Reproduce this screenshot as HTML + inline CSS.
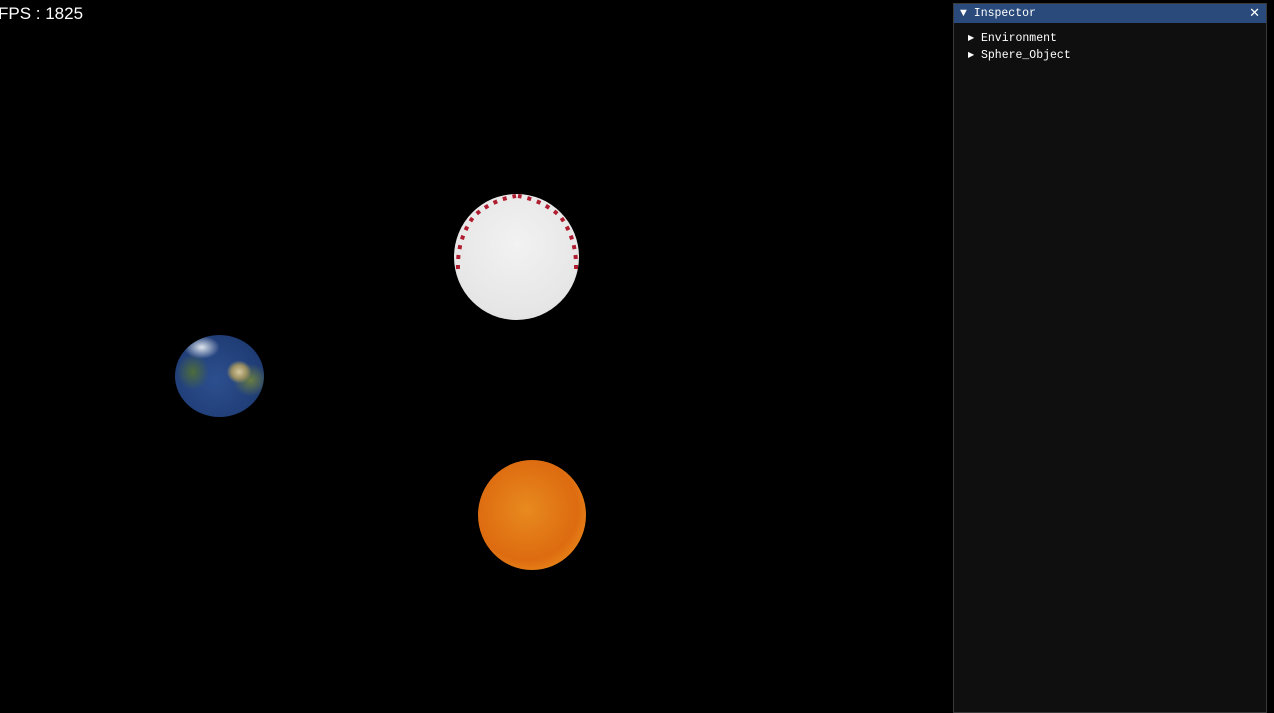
<!DOCTYPE html>
<html><head><style>
body{margin:0;width:1274px;height:711px;background:#000;position:relative;overflow:hidden;font-family:"Liberation Sans",sans-serif}
#fps{position:absolute;left:-2px;top:4px;color:#fff;font-size:17px}
.ball{position:absolute;border-radius:50%}
#panel{position:absolute;left:953px;top:3px;width:314px;height:710px;background:#0f0f0f;border:1px solid #3a3a3a;box-sizing:border-box}
#title{height:19px;background:#294a7a;color:#fff;font-family:"Liberation Mono",monospace;font-size:11.5px;line-height:19px;padding-left:6px;position:relative}
#title span{position:absolute;right:6px;top:0;font-size:13px}
.item{position:absolute;left:14px;color:#fff;font-family:"Liberation Mono",monospace;font-size:11.5px}
.tri{font-size:8px;display:inline-block;width:13px;vertical-align:1px}
</style></head><body>
<div id="fps">FPS : 1825</div>
<div class="ball" style="left:454px;top:194px;width:125px;height:126px;background:radial-gradient(circle at 50% 40%,#f2f2f2,#e6e6e6 70%,#dcdcdc)"></div>
<svg style="position:absolute;left:454px;top:194px" width="126" height="126">
<path d="M4 75 Q3 45 20 22 Q38 6 62 2" stroke="#b01c30" stroke-width="4" fill="none" stroke-dasharray="4 6"/>
<path d="M122 75 Q123 45 106 22 Q88 6 64 2" stroke="#b01c30" stroke-width="4" fill="none" stroke-dasharray="4 6"/>
</svg>
<div class="ball" style="left:175px;top:335px;width:89px;height:82px;background:radial-gradient(ellipse 14% 14% at 72% 45%,#d8c9a0,#9a8f60 60%,transparent 100%),radial-gradient(ellipse 20% 20% at 85% 55%,#6a7d40,transparent),radial-gradient(ellipse 20% 14% at 30% 15%,#dfe6ee,transparent),radial-gradient(ellipse 18% 22% at 20% 45%,#4d6b3a,transparent),radial-gradient(circle at 45% 55%,#2d4f8e,#1f3c75 70%,#1a3060)"></div>
<div class="ball" style="left:478px;top:460px;width:108px;height:110px;background:radial-gradient(circle at 45% 45%,#e88a1e,#dd6b10 60%,#f4a020 95%)"></div>
<div id="panel">
<div id="title">▼ Inspector<span>✕</span></div>
<div class="item" style="top:28px"><span class="tri">▶</span>Environment</div>
<div class="item" style="top:45px"><span class="tri">▶</span>Sphere_Object</div>
</div>
</body></html>
